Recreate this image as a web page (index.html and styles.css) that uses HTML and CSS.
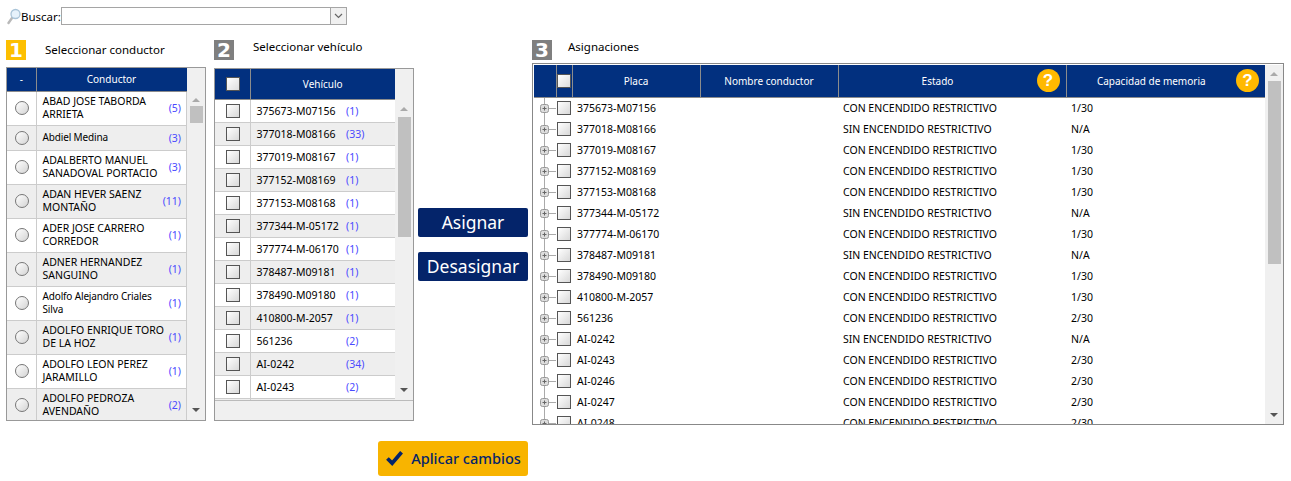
FILE: index.html
```html
<!DOCTYPE html>
<html lang="es">

<head>
    <meta charset="UTF-8">
    <meta name="viewport" content="width=device-width, initial-scale=1.0">
    <title>Asignaciones</title>
    <link rel="stylesheet" href="styles.css">
</head>

<body>
<svg class="defs" width="0" height="0">
    <symbol id="tree" viewBox="0 0 23 21">
        <path d="M10.5 0V21M14 10.5H22" stroke="#aaa" fill="none"/>
        <rect x="6.5" y="6.5" width="8" height="8" rx="2" fill="#ddd" stroke="#999"/>
        <path d="M8.5 10.5H12.5M10.5 8.5V12.5" stroke="#666" fill="none"/>
    </symbol>
</svg>

<div class="search-row">
    <svg class="lens" width="14" height="17" viewBox="0 0 14 17">
        <path d="M5 10L1.5 15" stroke="#b9b9b9" stroke-width="2.4" stroke-linecap="round"/>
        <circle cx="8.5" cy="6" r="4.5" fill="#e6f2fb" stroke="#a9c4d8" stroke-width="1.3"/>
    </svg>
    <label class="search-label">Buscar:</label>
    <div class="combo">
        <span class="combo-btn">
            <svg width="9" height="6" viewBox="0 0 9 6"><path d="M1 1L4.5 4.5L8 1" stroke="#666" stroke-width="1.2" fill="none"/></svg>
        </span>
    </div>
</div>

<div class="columns">
    <section class="col-driver">
        <div class="step">
            <span class="badge badge-on">1</span>
            <span class="step-title title-low">Seleccionar conductor</span>
        </div>
        <div class="panel panel-driver">
            <div class="grid-body">
                <table class="grid">
                    <colgroup>
                        <col class="w-radio">
                        <col class="w-name">
                        <col>
                    </colgroup>
                    <thead>
                    <tr class="head-driver">
                        <th>-</th>
                        <th colspan="2">Conductor</th>
                    </tr>
                    </thead>
                    <tbody>
                    <tr class="tall"><td class="c-radio"><span class="radio"></span></td><td class="c-name">ABAD JOSE TABORDA<br>ARRIETA</td><td class="c-count">(5)</td></tr>
                    <tr class="short"><td class="c-radio"><span class="radio"></span></td><td class="c-name mixed">Abdiel Medina</td><td class="c-count">(3)</td></tr>
                    <tr class="tall"><td class="c-radio"><span class="radio"></span></td><td class="c-name">ADALBERTO MANUEL<br>SANADOVAL PORTACIO</td><td class="c-count">(3)</td></tr>
                    <tr class="tall"><td class="c-radio"><span class="radio"></span></td><td class="c-name">ADAN HEVER SAENZ<br>MONTAÑO</td><td class="c-count">(11)</td></tr>
                    <tr class="tall"><td class="c-radio"><span class="radio"></span></td><td class="c-name">ADER JOSE CARRERO<br>CORREDOR</td><td class="c-count">(1)</td></tr>
                    <tr class="tall"><td class="c-radio"><span class="radio"></span></td><td class="c-name">ADNER HERNANDEZ<br>SANGUINO</td><td class="c-count">(1)</td></tr>
                    <tr class="tall"><td class="c-radio"><span class="radio"></span></td><td class="c-name mixed">Adolfo Alejandro Criales<br>Silva</td><td class="c-count">(1)</td></tr>
                    <tr class="tall"><td class="c-radio"><span class="radio"></span></td><td class="c-name">ADOLFO ENRIQUE TORO<br>DE LA HOZ</td><td class="c-count">(1)</td></tr>
                    <tr class="tall"><td class="c-radio"><span class="radio"></span></td><td class="c-name">ADOLFO LEON PEREZ<br>JARAMILLO</td><td class="c-count">(1)</td></tr>
                    <tr class="tall"><td class="c-radio"><span class="radio"></span></td><td class="c-name">ADOLFO PEDROZA<br>AVENDAÑO</td><td class="c-count">(2)</td></tr>
                    </tbody>
                </table>
            </div>
            <div class="scrollbar">
                <span class="arrow-up"></span>
                <span class="thumb thumb-driver"></span>
                <span class="arrow-down"></span>
            </div>
        </div>
    </section>

    <section class="col-vehicle">
        <div class="step">
            <span class="badge badge-off">2</span>
            <span class="step-title">Seleccionar vehículo</span>
        </div>
        <div class="panel panel-vehicle">
            <div class="panel-main">
                <div class="grid-body">
                    <table class="grid">
                        <colgroup>
                            <col class="w-check">
                            <col class="w-plate">
                            <col>
                        </colgroup>
                        <thead>
                        <tr class="head-vehicle">
                            <th class="c-head-check"><span class="check check-head"></span></th>
                            <th colspan="2">Vehículo</th>
                        </tr>
                        </thead>
                        <tbody>
                        <tr class="veh"><td class="c-check"><span class="check"></span></td><td class="c-plate">375673-M07156</td><td class="c-num">(1)</td></tr>
                        <tr class="veh"><td class="c-check"><span class="check"></span></td><td class="c-plate">377018-M08166</td><td class="c-num">(33)</td></tr>
                        <tr class="veh"><td class="c-check"><span class="check"></span></td><td class="c-plate">377019-M08167</td><td class="c-num">(1)</td></tr>
                        <tr class="veh"><td class="c-check"><span class="check"></span></td><td class="c-plate">377152-M08169</td><td class="c-num">(1)</td></tr>
                        <tr class="veh"><td class="c-check"><span class="check"></span></td><td class="c-plate">377153-M08168</td><td class="c-num">(1)</td></tr>
                        <tr class="veh"><td class="c-check"><span class="check"></span></td><td class="c-plate">377344-M-05172</td><td class="c-num">(1)</td></tr>
                        <tr class="veh"><td class="c-check"><span class="check"></span></td><td class="c-plate">377774-M-06170</td><td class="c-num">(1)</td></tr>
                        <tr class="veh"><td class="c-check"><span class="check"></span></td><td class="c-plate">378487-M09181</td><td class="c-num">(1)</td></tr>
                        <tr class="veh"><td class="c-check"><span class="check"></span></td><td class="c-plate">378490-M09180</td><td class="c-num">(1)</td></tr>
                        <tr class="veh"><td class="c-check"><span class="check"></span></td><td class="c-plate">410800-M-2057</td><td class="c-num">(1)</td></tr>
                        <tr class="veh"><td class="c-check"><span class="check"></span></td><td class="c-plate">561236</td><td class="c-num">(2)</td></tr>
                        <tr class="veh"><td class="c-check"><span class="check"></span></td><td class="c-plate">AI-0242</td><td class="c-num">(34)</td></tr>
                        <tr class="veh"><td class="c-check"><span class="check"></span></td><td class="c-plate">AI-0243</td><td class="c-num">(2)</td></tr>
                        <tr class="veh"><td class="c-check"></td><td class="c-plate"></td><td class="c-num"></td></tr>
                        </tbody>
                    </table>
                </div>
                <div class="scrollbar">
                    <span class="arrow-up"></span>
                    <span class="thumb thumb-vehicle"></span>
                    <span class="arrow-down"></span>
                </div>
            </div>
            <div class="panel-foot"></div>
        </div>
    </section>

    <div class="actions">
        <button class="btn-blue">Asignar</button>
        <button class="btn-blue">Desasignar</button>
    </div>

    <section class="col-assign">
        <div class="step">
            <span class="badge badge-off">3</span>
            <span class="step-title title-near">Asignaciones</span>
        </div>
        <div class="panel panel-assign">
            <div class="grid-body">
                <table class="grid tree-grid">
                    <thead>
                    <tr class="head-assign">
                        <th class="c-tree"></th>
                        <th class="c-box"><span class="check check-head"></span></th>
                        <th class="c-placa">Placa</th>
                        <th class="c-driver">Nombre conductor</th>
                        <th class="c-state"><div class="th-help"><span class="th-text">Estado</span><span class="help">?</span></div></th>
                        <th class="c-mem"><div class="th-help"><span class="th-text">Capacidad de memoria</span><span class="help">?</span></div></th>
                    </tr>
                    </thead>
                    <tbody>
                    <tr><td><svg class="tree"><use href="#tree"/></svg></td><td><span class="check"></span></td><td>375673-M07156</td><td></td><td>CON ENCENDIDO RESTRICTIVO</td><td>1/30</td></tr>
                    <tr><td><svg class="tree"><use href="#tree"/></svg></td><td><span class="check"></span></td><td>377018-M08166</td><td></td><td>SIN ENCENDIDO RESTRICTIVO</td><td>N/A</td></tr>
                    <tr><td><svg class="tree"><use href="#tree"/></svg></td><td><span class="check"></span></td><td>377019-M08167</td><td></td><td>CON ENCENDIDO RESTRICTIVO</td><td>1/30</td></tr>
                    <tr><td><svg class="tree"><use href="#tree"/></svg></td><td><span class="check"></span></td><td>377152-M08169</td><td></td><td>CON ENCENDIDO RESTRICTIVO</td><td>1/30</td></tr>
                    <tr><td><svg class="tree"><use href="#tree"/></svg></td><td><span class="check"></span></td><td>377153-M08168</td><td></td><td>CON ENCENDIDO RESTRICTIVO</td><td>1/30</td></tr>
                    <tr><td><svg class="tree"><use href="#tree"/></svg></td><td><span class="check"></span></td><td>377344-M-05172</td><td></td><td>SIN ENCENDIDO RESTRICTIVO</td><td>N/A</td></tr>
                    <tr><td><svg class="tree"><use href="#tree"/></svg></td><td><span class="check"></span></td><td>377774-M-06170</td><td></td><td>CON ENCENDIDO RESTRICTIVO</td><td>1/30</td></tr>
                    <tr><td><svg class="tree"><use href="#tree"/></svg></td><td><span class="check"></span></td><td>378487-M09181</td><td></td><td>SIN ENCENDIDO RESTRICTIVO</td><td>N/A</td></tr>
                    <tr><td><svg class="tree"><use href="#tree"/></svg></td><td><span class="check"></span></td><td>378490-M09180</td><td></td><td>CON ENCENDIDO RESTRICTIVO</td><td>1/30</td></tr>
                    <tr><td><svg class="tree"><use href="#tree"/></svg></td><td><span class="check"></span></td><td>410800-M-2057</td><td></td><td>CON ENCENDIDO RESTRICTIVO</td><td>1/30</td></tr>
                    <tr><td><svg class="tree"><use href="#tree"/></svg></td><td><span class="check"></span></td><td>561236</td><td></td><td>CON ENCENDIDO RESTRICTIVO</td><td>2/30</td></tr>
                    <tr><td><svg class="tree"><use href="#tree"/></svg></td><td><span class="check"></span></td><td>AI-0242</td><td></td><td>SIN ENCENDIDO RESTRICTIVO</td><td>N/A</td></tr>
                    <tr><td><svg class="tree"><use href="#tree"/></svg></td><td><span class="check"></span></td><td>AI-0243</td><td></td><td>CON ENCENDIDO RESTRICTIVO</td><td>2/30</td></tr>
                    <tr><td><svg class="tree"><use href="#tree"/></svg></td><td><span class="check"></span></td><td>AI-0246</td><td></td><td>CON ENCENDIDO RESTRICTIVO</td><td>2/30</td></tr>
                    <tr><td><svg class="tree"><use href="#tree"/></svg></td><td><span class="check"></span></td><td>AI-0247</td><td></td><td>CON ENCENDIDO RESTRICTIVO</td><td>2/30</td></tr>
                    <tr><td><svg class="tree"><use href="#tree"/></svg></td><td><span class="check"></span></td><td>AI-0248</td><td></td><td>CON ENCENDIDO RESTRICTIVO</td><td>2/30</td></tr>
                    </tbody>
                </table>
            </div>
            <div class="scrollbar">
                <span class="arrow-up"></span>
                <span class="thumb thumb-assign"></span>
                <span class="arrow-down"></span>
            </div>
        </div>
    </section>
</div>

<div class="apply-row">
    <button class="btn-apply">
        <svg width="19" height="16" viewBox="0 0 20 17"><path d="M2.5 9L7.5 14L17.5 2.5" stroke="#04246a" stroke-width="4" fill="none"/></svg>
        Aplicar cambios
    </button>
</div>
</body>

</html>
```

FILE: styles.css
```css
* {
    padding: 0;
    margin: 0;
    box-sizing: border-box;
}

body {
    font: 10.5px "Noto Sans", "Liberation Sans", sans-serif;
    color: #000;
    background-color: #fff;
    width: 1291px;
    height: 481px;
    overflow: hidden;
}

.defs {
    display: block;
    height: 0;
}

/* buscador */
.search-row {
    display: flex;
    align-items: center;
    height: 18px;
    margin: 7px 0 0 7px;
}

.search-label {
    font-size: 11.5px;
    width: 40px;
}

.combo {
    width: 286px;
    height: 18px;
    border: 1px solid #a5a5a5;
    display: flex;
    justify-content: flex-end;
}

.combo-btn {
    width: 16px;
    border-left: 1px solid #a5a5a5;
    background-color: #f0f0f0;
    display: flex;
    align-items: center;
    justify-content: center;
}

/* columnas */
.columns {
    display: flex;
    align-items: flex-start;
    margin: 15px 0 0 6px;
}

.col-driver {
    width: 200px;
}

.col-vehicle {
    width: 200px;
    margin-left: 8px;
}

.col-assign {
    width: 752px;
    margin-left: 4px;
}

.step {
    display: flex;
    height: 20px;
}

.badge {
    width: 20px;
    height: 20px;
    font: bold 20px/20px "DejaVu Sans", sans-serif;
    color: #fff;
    text-align: center;
}

.badge-on {
    background-color: #fdbf00;
}

.badge-off {
    background-color: #7f7f7f;
}

.step-title {
    font-size: 11.5px;
    line-height: 14px;
    margin-left: 19px;
}

.title-low {
    margin-top: 3px;
}

.title-near {
    margin-left: 16px;
}

.panel {
    border: 1px solid #999;
    display: flex;
    overflow: hidden;
}

.panel-driver {
    height: 354px;
    margin-top: 7px;
}

.panel-vehicle {
    height: 353px;
    margin-top: 8px;
    flex-direction: column;
}

.panel-main {
    display: flex;
    height: 331px;
}

.panel-foot {
    height: 20px;
    background-color: #f0f0f0;
    border-top: 1px solid #bbb;
}

.panel-assign {
    height: 362px;
    margin-top: 3px;
    border-color: #888;
    padding: 1px 0 0 1px;
}

.grid-body {
    flex: 1;
    overflow: hidden;
}

.grid {
    border-collapse: collapse;
    border-spacing: 0;
    table-layout: fixed;
    width: 100%;
}

.grid th {
    background-color: #02307f;
    color: #fff;
    font-size: 10px;
    font-weight: normal;
    border-right: 1px solid #8c8c8c;
    border-bottom: 1px solid #8c8c8c;
    text-align: center;
}

.grid th:last-child {
    border-right: 0;
}

/* conductor */
.head-driver {
    height: 23px;
}

.w-radio {
    width: 29px;
}

.w-name {
    width: 121px;
}

.c-name {
    padding-left: 6px;
    line-height: 13px;
    white-space: nowrap;
}

.mixed {
    font-size: 10px;
    letter-spacing: -0.15px;
}

.panel-driver .grid td {
    border-bottom: 1px solid #ccc;
}

.panel-driver .grid .c-radio {
    border-right: 1px solid #ccc;
    padding-left: 1px;
}

.panel-driver .grid .c-count {
    border-right: 1px solid #ccc;
    text-align: right;
    padding-right: 5px;
}

.c-count,
.c-num {
    color: #4a4aff;
}

.grid tbody tr:nth-child(even) {
    background-color: #eee;
}

.tree-grid tbody tr:nth-child(even) {
    background-color: transparent;
}

.tall {
    height: 34px;
}

.short {
    height: 25px;
}

.c-radio .radio {
    display: block;
    width: 14px;
    height: 14px;
    margin: 0 auto;
    border: 1px solid #777;
    border-radius: 50%;
    background: linear-gradient(135deg, #fff, #d4d4d4);
}

/* vehiculo */
.head-vehicle {
    height: 30px;
}

.veh {
    height: 23px;
}

.w-check {
    width: 35px;
}

.w-plate {
    width: 96px;
}

.c-plate {
    padding-left: 6px;
    white-space: nowrap;
}

.panel-vehicle .grid td {
    border-bottom: 1px solid #ccc;
}

.panel-vehicle .grid .c-check {
    border-right: 1px solid #ccc;
    padding-left: 1px;
}

.grid .c-head-check {
    padding-left: 1px;
}

.check {
    display: block;
    width: 14px;
    height: 14px;
    margin: 0 auto;
    border: 1px solid #555;
    background: linear-gradient(135deg, #fff, #d8d8d8);
}

.check-head {
    background: linear-gradient(135deg, #fff, #ddd);
}

/* scroll */
.scrollbar {
    width: 18px;
    flex: none;
    background-color: #f0f0f0;
    display: flex;
    flex-direction: column;
    align-items: center;
}

.arrow-up {
    width: 0;
    height: 0;
    border-left: 4px solid transparent;
    border-right: 4px solid transparent;
    border-bottom: 4px solid #aaa;
}

.arrow-down {
    width: 0;
    height: 0;
    border-left: 4px solid transparent;
    border-right: 4px solid transparent;
    border-top: 4px solid #555;
    margin-top: auto;
}

.thumb {
    width: 13px;
    background-color: #c0c0c0;
    margin-top: 4px;
}

.panel-driver .arrow-up {
    margin-top: 30px;
}

.panel-driver .arrow-down {
    margin-bottom: 8px;
}

.thumb-driver {
    height: 17px;
}

.panel-vehicle .arrow-up {
    margin-top: 38px;
}

.panel-vehicle .arrow-down {
    margin-bottom: 8px;
}

.thumb-vehicle {
    height: 120px;
    margin-top: 6px;
}

.panel-assign .arrow-up {
    margin-top: 7px;
}

.panel-assign .arrow-down {
    margin-bottom: 7px;
}

.thumb-assign {
    height: 183px;
    margin-top: 5px;
}

/* botones */
.actions {
    width: 110px;
    margin: 168px 0 0 4px;
    display: flex;
    flex-direction: column;
    gap: 15px;
}

.btn-blue {
    height: 29px;
    border: 0;
    border-radius: 2px;
    background-color: #04246a;
    color: #fff;
    font: 17.5px/26px "Noto Sans", sans-serif;
    padding-bottom: 2px;
}

/* asignaciones */
.head-assign {
    height: 32px;
}

.c-tree {
    width: 22px;
}

.c-box {
    width: 16px;
}

.c-placa {
    width: 128px;
}

.c-driver {
    width: 138px;
}

.c-state {
    width: 228px;
}

.tree-grid td {
    height: 21px;
    padding-left: 5px;
    white-space: nowrap;
}

.tree-grid td:first-child {
    padding: 0;
}

.tree-grid td:nth-child(2) {
    padding: 0 0 0 1px;
}

.tree-grid td .check {
    margin: 0;
}

.tree {
    display: block;
    width: 23px;
    height: 21px;
}

.th-help {
    display: flex;
    align-items: center;
}

.th-text {
    flex: 1;
    text-align: center;
}

.help {
    width: 23px;
    height: 23px;
    margin-right: 6px;
    border-radius: 50%;
    background-color: #ffb900;
    color: #fff;
    font: bold 17px/23px "Liberation Sans", sans-serif;
    text-align: center;
}

/* aplicar */
.apply-row {
    display: flex;
    margin: 16px 0 0 378px;
}

.btn-apply {
    width: 150px;
    height: 35px;
    border: 0;
    border-radius: 3px;
    background-color: #f8b400;
    color: #04246a;
    font: 500 14.5px "Noto Sans", sans-serif;
    display: flex;
    align-items: center;
    justify-content: center;
    gap: 7px;
    padding-bottom: 2px;
}
```
